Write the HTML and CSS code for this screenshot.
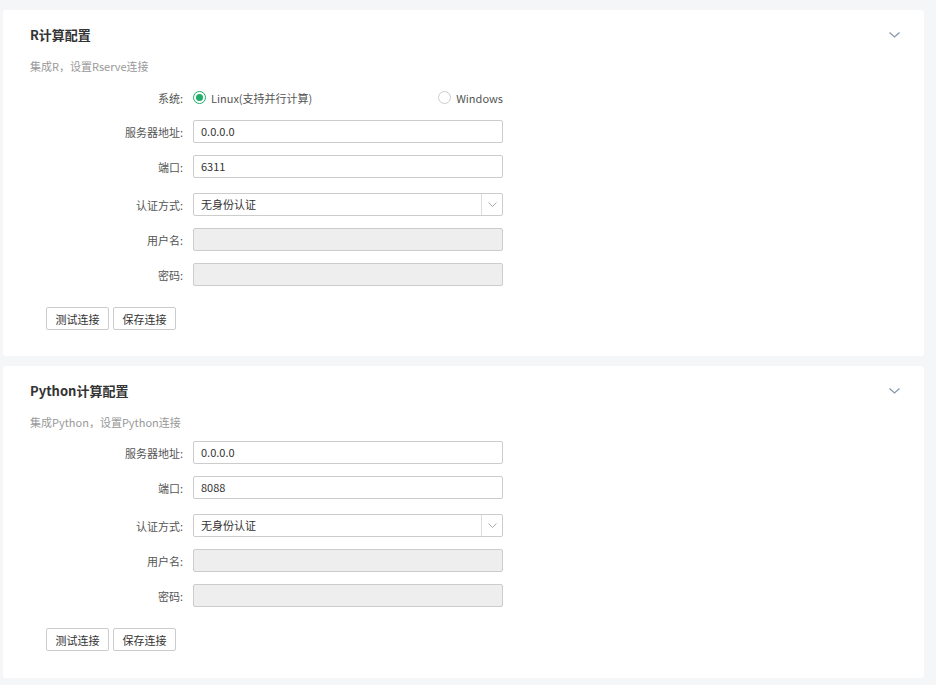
FILE: index.html
```html
<!DOCTYPE html>
<html lang="zh">
<head>
<meta charset="utf-8">
<title>计算配置</title>
<link rel="stylesheet" href="styles.css">
</head>
<body>
<div class="page">
  <section class="card">
    <div class="card-head">
      <h2 class="title">R计算配置</h2>
      <svg class="chev" width="11" height="6" viewBox="0 0 11 6"><path d="M0.5 0.5 L5.5 5 L10.5 0.5" fill="none" stroke="#8796a8" stroke-width="1.2"/></svg>
    </div>
    <p class="sub">集成R，设置Rserve连接</p>
    <div class="form">
      <label class="lbl">系统:</label>
      <div class="radios">
        <span class="radio on"><i class="dot"></i>Linux(支持并行计算)</span>
        <span class="radio"><i class="dot"></i>Windows</span>
      </div>
      <label class="lbl">服务器地址:</label>
      <div class="input">0.0.0.0</div>
      <label class="lbl">端口:</label>
      <div class="input">6311</div>
      <label class="lbl sel-row">认证方式:</label>
      <div class="select sel-row"><span class="val">无身份认证</span><span class="arrow"><svg width="9" height="5" viewBox="0 0 9 5"><path d="M0.5 0.5 L4.5 4.5 L8.5 0.5" fill="none" stroke="#aaa" stroke-width="1"/></svg></span></div>
      <label class="lbl">用户名:</label>
      <div class="input disabled"></div>
      <label class="lbl">密码:</label>
      <div class="input disabled"></div>
    </div>
    <div class="btns">
      <button class="btn">测试连接</button>
      <button class="btn">保存连接</button>
    </div>
  </section>

  <section class="card">
    <div class="card-head">
      <h2 class="title">Python计算配置</h2>
      <svg class="chev" width="11" height="6" viewBox="0 0 11 6"><path d="M0.5 0.5 L5.5 5 L10.5 0.5" fill="none" stroke="#8796a8" stroke-width="1.2"/></svg>
    </div>
    <p class="sub sub2">集成Python，设置Python连接</p>
    <div class="form">
      <label class="lbl">服务器地址:</label>
      <div class="input">0.0.0.0</div>
      <label class="lbl">端口:</label>
      <div class="input">8088</div>
      <label class="lbl sel-row">认证方式:</label>
      <div class="select sel-row"><span class="val">无身份认证</span><span class="arrow"><svg width="9" height="5" viewBox="0 0 9 5"><path d="M0.5 0.5 L4.5 4.5 L8.5 0.5" fill="none" stroke="#aaa" stroke-width="1"/></svg></span></div>
      <label class="lbl">用户名:</label>
      <div class="input disabled"></div>
      <label class="lbl">密码:</label>
      <div class="input disabled"></div>
    </div>
    <div class="btns">
      <button class="btn">测试连接</button>
      <button class="btn">保存连接</button>
    </div>
  </section>
</div>
</body>
</html>
```

FILE: styles.css
```css
* { box-sizing: border-box; }
html, body {
  margin: 0;
  padding: 0;
  background: #f5f6f8;
  font-family: "Noto Sans CJK SC", sans-serif;
  font-size: 11px;
  color: #333;
}
.page {
  padding: 10px 12px 7px 3px;
  display: flex;
  flex-direction: column;
  gap: 10px;
}
.card {
  background: #fff;
  border-radius: 3px;
  padding: 15px 24px 26px 0;
}
.card + .card { padding-bottom: 27px; }
.card-head {
  display: flex;
  align-items: center;
  justify-content: space-between;
  padding-left: 27px;
  height: 20px;
}
.title {
  margin: 0;
  font-size: 13px;
  font-weight: 700;
  color: #333;
  line-height: 20px;
}
.chev { margin-top: -1px; }
.sub {
  margin: 12px 0 0 27px;
  line-height: 18px;
  font-size: 11px;
  color: #999;
}
.form {
  margin-top: 12px;
  display: grid;
  grid-template-columns: 180px 310px;
  column-gap: 10px;
  row-gap: 12px;
  align-items: center;
}
.sub2 + .form { margin-top: 10px; }
.lbl {
  text-align: right;
  color: #555;
  line-height: 18px;
}
.radios {
  display: flex;
  justify-content: space-between;
  height: 21px;
  align-items: center;
}
.radio {
  display: flex;
  align-items: center;
  gap: 5px;
  color: #555;
}
.dot {
  width: 13px;
  height: 13px;
  border-radius: 50%;
  border: 1px solid #ccc;
  background: #fff;
  position: relative;
}
.radio.on .dot { border-color: #1eae68; }
.radio.on .dot::after {
  content: "";
  position: absolute;
  left: 2px;
  top: 2px;
  width: 7px;
  height: 7px;
  border-radius: 50%;
  background: #1eae68;
}
.input, .select {
  height: 23px;
  border: 1px solid #ccc;
  border-radius: 2px;
  padding: 0 7px;
  line-height: 21px;
  color: #333;
  background: #fff;
}
.input.disabled { background: #eee; }
.sel-row { margin-top: 3px; }
.select {
  display: flex;
  padding-right: 0;
}
.val { flex: 1; }
.arrow {
  width: 21px;
  border-left: 1px solid #ddd;
  display: flex;
  align-items: center;
  justify-content: center;
}
.btns {
  margin: 21px 0 0 43px;
  display: flex;
  gap: 4px;
}
.btn {
  height: 23px;
  width: 63px;
  padding: 0;
  border: 1px solid #ccc;
  border-radius: 2px;
  background: #fff;
  font: inherit;
  color: #333;
}
```
